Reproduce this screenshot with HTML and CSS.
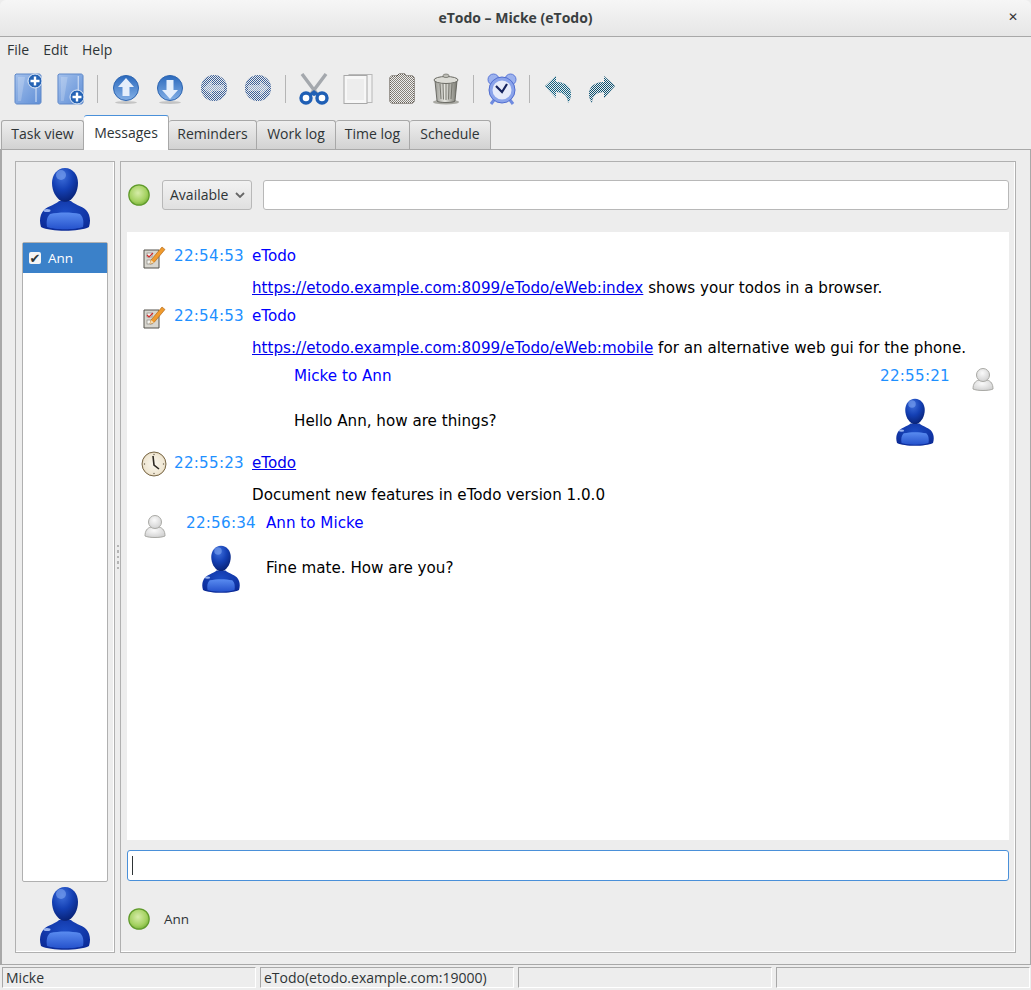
FILE: index.html
```html
<!DOCTYPE html>
<html lang="en">
<head>
  <meta charset="UTF-8">
  <title>eTodo - Micke (eTodo)</title>
  <meta name="viewport" content="width=device-width, initial-scale=1.0">
  <link rel="stylesheet" href="styles.css">
</head>
<body>
  <svg class="sprites" aria-hidden="true">
    <defs>
      <pattern id="dither" width="2" height="2" patternUnits="userSpaceOnUse">
        <rect width="1" height="1" fill="#ededed"/>
        <rect x="1" y="1" width="1" height="1" fill="#ededed"/>
      </pattern>
      <linearGradient id="gBook" x1="0" y1="0" x2="1" y2="1">
        <stop offset="0" stop-color="#a4c1ec"/><stop offset="1" stop-color="#5f8ed6"/>
      </linearGradient>
      <linearGradient id="gBlueBtn" x1="0" y1="0" x2="0" y2="1">
        <stop offset="0" stop-color="#2a69bd"/><stop offset="1" stop-color="#84b0e6"/>
      </linearGradient>
      <radialGradient id="gBody" cx="0.5" cy="0.35" r="0.7">
        <stop offset="0" stop-color="#1c4cc4"/><stop offset="1" stop-color="#0b2a96"/>
      </radialGradient>
      <linearGradient id="gChest" x1="0" y1="0" x2="0" y2="1">
        <stop offset="0" stop-color="#5a8cf0"/><stop offset="1" stop-color="#2552cc"/>
      </linearGradient>
      <radialGradient id="gHead" cx="0.4" cy="0.25" r="0.8">
        <stop offset="0" stop-color="#3f70dc"/><stop offset="0.5" stop-color="#1440b4"/><stop offset="1" stop-color="#071f70"/>
      </radialGradient>
      <radialGradient id="gBall" cx="0.45" cy="0.4" r="0.6">
        <stop offset="0" stop-color="#d6eca8"/><stop offset="0.7" stop-color="#a4d161"/><stop offset="1" stop-color="#7cb53c"/>
      </radialGradient>
      <radialGradient id="gGrey" cx="0.45" cy="0.35" r="0.7">
        <stop offset="0" stop-color="#fafafa"/><stop offset="1" stop-color="#cfcfcf"/>
      </radialGradient>
      <linearGradient id="gTrash" x1="0" y1="0" x2="1" y2="0">
        <stop offset="0" stop-color="#9b9b95"/><stop offset="0.45" stop-color="#e6e6e0"/><stop offset="1" stop-color="#77776f"/>
      </linearGradient>
      <radialGradient id="gClock" cx="0.5" cy="0.5" r="0.55">
        <stop offset="0" stop-color="#fbf8ef"/><stop offset="0.8" stop-color="#efe6d2"/><stop offset="1" stop-color="#b79c6c"/>
      </radialGradient>

      <symbol id="i-person" viewBox="0 0 64 64">
        <path d="M8 60C6 54 7 47 11 43c4-4 13-6 15-9h12c2 3 11 5 15 9 4 4 5 11 3 17-10 5-38 5-48 0z" fill="url(#gBody)"/>
        <path d="M14 60c-1-6 0-10 3-13 9-2 21-2 30 0 3 3 4 7 3 13-8 3-28 3-36 0z" fill="url(#gChest)"/>
        <path d="M32 1c8 0 13 7 13 15s-4 15-9 18c-2 1-6 1-8 0-5-3-9-10-9-18S24 1 32 1z" fill="url(#gHead)"/>
        <ellipse cx="14" cy="43.500" rx="3.500" ry="1.500" fill="#bcd2ff" opacity="0.8"/>
        <ellipse cx="28" cy="8" rx="5" ry="5" fill="#7fa5f0" opacity="0.6"/>
      </symbol>

      <symbol id="i-grey" viewBox="0 0 22 24">
        <path d="M1 22c0-5 2-8 6-9h8c4 1 6 4 6 9-4 2-16 2-20 0z" fill="url(#gGrey)" stroke="#a9a9a5"/>
        <circle cx="11" cy="8" r="6.500" fill="url(#gGrey)" stroke="#a9a9a5"/>
      </symbol>

      <symbol id="i-ball" viewBox="0 0 22 22">
        <circle cx="11" cy="11" r="10.200" fill="url(#gBall)" stroke="#5f9a2a" stroke-width="1.200"/>
      </symbol>

      <symbol id="i-memo" viewBox="0 0 24 24">
        <path d="M2 5h15v18H2z" fill="#d8d6cf" stroke="#55534d"/>
        <rect x="5" y="8" width="5" height="4" fill="#f4f4f0" stroke="#8a8880" stroke-width="0.700"/>
        <rect x="5" y="15" width="5" height="4" fill="#f4f4f0" stroke="#8a8880" stroke-width="0.700"/>
        <path d="M5 10l2 2 4-4" fill="none" stroke="#d42a2a" stroke-width="1.100"/>
        <path d="M9 15L20 2l3 2.500-11 13-4 1.500z" fill="#ef9a2d" stroke="#a95f10" stroke-width="0.600"/>
        <path d="M9 15l-1 4 4-1.500z" fill="#f4dcb0"/>
      </symbol>

      <symbol id="i-clock" viewBox="0 0 26 26">
        <circle cx="13" cy="13" r="12" fill="url(#gClock)" stroke="#7a6a4c"/>
        <path d="M12 5l1 9 5 4" fill="none" stroke="#2e2a24" stroke-width="1.600"/>
        <g fill="#6b6150"><circle cx="13" cy="3.500" r="0.700"/><circle cx="13" cy="22.500" r="0.700"/><circle cx="3.500" cy="13" r="0.700"/><circle cx="22.500" cy="13" r="0.700"/></g>
      </symbol>

      <symbol id="i-book" viewBox="0 0 28 32" preserveAspectRatio="none">
        <path d="M2 1h23c1 0 2 1 2 2v26c0 1-1 2-2 2H3c-1 0-2-1-2-2V2z" fill="url(#gBook)" stroke="#5f88c8"/>
        <path d="M22 3v26" stroke="#dbe7f8"/>
        <path d="M4 4h7L7 28H4z" fill="#fff" opacity="0.2"/>
      </symbol>

      <symbol id="i-plus" viewBox="0 0 16 16">
        <circle cx="8" cy="8" r="7" fill="#2563b5" stroke="#e7eef9"/>
        <path d="M8 3.500v9M3.500 8h9" stroke="#fff" stroke-width="2.400"/>
      </symbol>
    </defs>
  </svg>

  <header class="titlebar">
    <span class="title">eTodo – Micke (eTodo)</span>
    <span class="close">✕</span>
  </header>

  <nav class="menubar">
    <span>File</span>
    <span>Edit</span>
    <span>Help</span>
  </nav>

  <div class="toolbar">
    <svg class="tool" viewBox="0 0 32 32"><use href="#i-book" x="4" width="28" height="32"/><use href="#i-plus" x="17" y="0" width="16" height="16"/></svg>
    <svg class="tool" viewBox="0 0 32 32"><use href="#i-book" x="3" width="27" height="32"/><use href="#i-plus" x="15" y="16" width="16" height="16"/></svg>
    <i class="sep"></i>
    <svg class="tool" viewBox="0 0 32 32">
      <ellipse cx="16" cy="29.500" rx="11" ry="1.500" fill="#c4c4c4"/>
      <circle cx="16" cy="15" r="12.500" fill="url(#gBlueBtn)" stroke="#2c64b0"/>
      <path d="M16 5l8 9h-4.500v9h-7v-9H8z" fill="#e4eefb"/>
    </svg>
    <svg class="tool" viewBox="0 0 32 32">
      <ellipse cx="16" cy="29.500" rx="11" ry="1.500" fill="#c4c4c4"/>
      <circle cx="16" cy="15" r="12.500" fill="url(#gBlueBtn)" stroke="#2c64b0"/>
      <path d="M16 26l-8-9h4.500V7h7v10H24z" fill="#e4eefb"/>
    </svg>
    <svg class="tool" viewBox="0 0 32 32">
      <circle cx="16" cy="15" r="13" fill="#3a5f98"/>
      <path d="M5 15l9-7v4h12v6H14v4z" fill="#8ea6c8"/>
      <circle cx="16" cy="15" r="13" fill="url(#dither)"/>
    </svg>
    <svg class="tool" viewBox="0 0 32 32">
      <circle cx="16" cy="15" r="13" fill="#3a5f98"/>
      <path d="M27 15l-9-7v4H6v6h12v4z" fill="#8ea6c8"/>
      <circle cx="16" cy="15" r="13" fill="url(#dither)"/>
    </svg>
    <i class="sep"></i>
    <svg class="tool" viewBox="0 0 32 32">
      <path d="M4 1l15 20M28 1L13 21" stroke="#a4a8ad" stroke-width="3.400" fill="none"/>
      <circle cx="8" cy="25" r="5" fill="#fff" stroke="#1f5fb5" stroke-width="3.400"/>
      <circle cx="24" cy="25" r="5" fill="#fff" stroke="#1f5fb5" stroke-width="3.400"/>
      <path d="M11 21l5-4 5 4-5 2z" fill="#1f5fb5"/>
    </svg>
    <svg class="tool" viewBox="0 0 32 32">
      <rect x="7" y="1.500" width="23" height="28" fill="#f2f2f2" stroke="#b8b8b8"/>
      <rect x="2" y="2.500" width="23" height="28" fill="#f7f7f7" stroke="#a8a8a8"/>
      <path d="M5 6h17v21H5z" fill="#e6e6e6" opacity="0.600"/>
    </svg>
    <svg class="tool" viewBox="0 0 32 32">
      <path d="M6 3h5l2-2h6l2 2h5c1 0 2 1 2 2v23c0 1-1 2-2 2H6c-1 0-2-1-2-2V5c0-1 1-2 2-2z" fill="#858078" stroke="#4a4238"/>
      <path d="M6 3h5l2-2h6l2 2h5c1 0 2 1 2 2v23c0 1-1 2-2 2H6c-1 0-2-1-2-2V5c0-1 1-2 2-2z" fill="url(#dither)"/>
    </svg>
    <svg class="tool" viewBox="0 0 32 32">
      <ellipse cx="16" cy="29" rx="13" ry="2.500" fill="#a9a9a3"/>
      <path d="M5 8l2 20c1 2 17 2 18 0l2-20z" fill="url(#gTrash)" stroke="#55554f" stroke-width="0.800"/>
      <path d="M10 11l1 15M16 11v16M22 11l-1 15M13 11l.5 15.500M19 11l-.5 15.500" stroke="#6f6f68" stroke-width="0.900"/>
      <ellipse cx="16" cy="7" rx="12" ry="3.500" fill="#dcdcd6" stroke="#6a6a63"/>
      <ellipse cx="16" cy="2.800" rx="3" ry="1.800" fill="#bdbdb6" stroke="#6a6a63" stroke-width="0.700"/>
    </svg>
    <i class="sep"></i>
    <svg class="tool" viewBox="0 0 32 32">
      <path d="M8 27l-3 4M24 27l3 4" stroke="#6f8be0" stroke-width="3"/>
      <circle cx="7.500" cy="6.500" r="5.500" fill="#9cb2ee" stroke="#5b78d8"/>
      <circle cx="24.500" cy="6.500" r="5.500" fill="#9cb2ee" stroke="#5b78d8"/>
      <circle cx="16" cy="17" r="13" fill="#8aa3ea" stroke="#4f6cd0"/>
      <circle cx="16" cy="17" r="9.500" fill="#e6ebfa"/>
      <path d="M10 13l6 6 5-8" fill="none" stroke="#16235e" stroke-width="2.200"/>
    </svg>
    <i class="sep"></i>
    <svg class="tool" viewBox="0 0 32 32">
      <path d="M3 13L14 3v6c8 0 15 4 15 12 0 3-1 6-3 9 0-7-4-11-12-11v6z" fill="#0f5f80"/>
      <path d="M3 13L14 3v6c8 0 15 4 15 12 0 3-1 6-3 9 0-7-4-11-12-11v6z" fill="url(#dither)"/>
    </svg>
    <svg class="tool" viewBox="0 0 32 32">
      <path d="M29 13L18 3v6C10 9 3 13 3 21c0 3 1 6 3 9 0-7 4-11 12-11v6z" fill="#0a5070"/>
      <path d="M29 13L18 3v6C10 9 3 13 3 21c0 3 1 6 3 9 0-7 4-11 12-11v6z" fill="url(#dither)"/>
    </svg>
  </div>

  <div class="tabs">
    <span class="tab">Task view</span>
    <span class="tab active">Messages</span>
    <span class="tab">Reminders</span>
    <span class="tab">Work log</span>
    <span class="tab">Time log</span>
    <span class="tab">Schedule</span>
  </div>

  <main class="notebook">
    <aside class="users panel">
      <svg class="avatar"><use href="#i-person"/></svg>
      <ul class="user-list">
        <li class="selected"><span class="check">✔</span>Ann</li>
      </ul>
      <svg class="avatar"><use href="#i-person"/></svg>
    </aside>

    <div class="splitter"><i></i><i></i><i></i><i></i><i></i></div>

    <section class="chat panel">
      <div class="status-row">
        <svg class="ball"><use href="#i-ball"/></svg>
        <div class="select"><span class="select-label">Available</span><svg class="chevron" viewBox="0 0 10 6"><path d="M1 1l4 4 4-4" fill="none" stroke="#666" stroke-width="1.800"/></svg></div>
        <div class="field"></div>
      </div>

      <div class="log">
        <div class="msg sys">
          <svg class="msg-icon"><use href="#i-memo"/></svg>
          <span class="time">22:54:53</span>
          <span class="who">eTodo</span>
          <p class="text"><a href="#">https://etodo.example.com:8099/eTodo/eWeb:index</a> shows your todos in a browser.</p>
        </div>
        <div class="msg sys">
          <svg class="msg-icon"><use href="#i-memo"/></svg>
          <span class="time">22:54:53</span>
          <span class="who">eTodo</span>
          <p class="text"><a href="#">https://etodo.example.com:8099/eTodo/eWeb:mobile</a> for an alternative web gui for the phone.</p>
        </div>
        <div class="msg out">
          <div class="out-main">
            <span class="who">Micke to Ann</span>
            <p>Hello Ann, how are things?</p>
          </div>
          <div class="out-time">
            <span class="time">22:55:21</span>
            <svg class="small-avatar"><use href="#i-person"/></svg>
          </div>
          <svg class="grey"><use href="#i-grey"/></svg>
        </div>
        <div class="msg sys">
          <svg class="msg-icon clock"><use href="#i-clock"/></svg>
          <span class="time">22:55:23</span>
          <a class="who" href="#">eTodo</a>
          <p class="text">Document new features in eTodo version 1.0.0</p>
        </div>
        <div class="msg in">
          <svg class="grey"><use href="#i-grey"/></svg>
          <div class="in-time">
            <span class="time">22:56:34</span>
            <svg class="small-avatar"><use href="#i-person"/></svg>
          </div>
          <div class="in-main">
            <span class="who">Ann to Micke</span>
            <p>Fine mate. How are you?</p>
          </div>
        </div>
      </div>

      <div class="field compose"><i class="caret"></i></div>

      <div class="peer-row">
        <svg class="ball"><use href="#i-ball"/></svg>
        <span>Ann</span>
      </div>
    </section>
  </main>

  <footer class="statusbar">
    <span>Micke</span>
    <span>eTodo(etodo.example.com:19000)</span>
    <span></span>
    <span></span>
  </footer>
</body>
</html>
```

FILE: styles.css
```css
body {
  margin: 0;
  height: 990px;
  display: flex;
  flex-direction: column;
  overflow: hidden;
  background-color: #ededed;
  color: #2e3436;
  font-family: "Open Sans", "Noto Sans", sans-serif;
  font-size: 14px;
}

.sprites {
  display: block;
  width: 0;
  height: 0;
  flex: none;
}

.titlebar {
  height: 36px;
  flex: none;
  box-sizing: content-box;
  display: grid;
  grid-template-columns: 1fr auto 1fr;
  align-items: center;
  border-bottom: 1px solid #a8a8a8;
  background: linear-gradient(#f6f6f6, #e6e6e6);
  border-radius: 6px 6px 0 0;
}

.title {
  grid-column: 2;
  padding-bottom: 2px;
  font-weight: 700;
  font-size: 14px;
  color: #3a3f41;
}

.close {
  justify-self: end;
  margin-right: 13px;
  padding-bottom: 2px;
  font-family: "DejaVu Sans", sans-serif;
  font-size: 12px;
  font-weight: 700;
  color: #333;
}

.menubar {
  height: 26px;
  flex: none;
  box-sizing: border-box;
  padding: 0 0 2px 7px;
  display: flex;
  align-items: center;
  gap: 14px;
}

.toolbar {
  height: 52px;
  flex: none;
  display: flex;
  align-items: center;
  gap: 12px;
  padding-left: 10px;
}

.tool {
  width: 32px;
  height: 32px;
  flex: none;
}

.sep {
  width: 1px;
  height: 28px;
  background-color: #b5b5b5;
  margin-left: -1px;
}

.tabs {
  height: 34px;
  flex: none;
  display: grid;
  grid-template-columns: 83px 85px 88px 79px 74px 81px;
  justify-content: start;
  align-items: end;
  padding-left: 1px;
}

.tab {
  height: 29px;
  box-sizing: border-box;
  line-height: 25px;
  text-align: center;
  border: 1px solid #a8a8a8;
  border-bottom: none;
  border-left-width: 0;
  border-radius: 3px 3px 0 0;
  background: linear-gradient(#eeeeee, #d2d2d2);
}

.tab:first-child {
  border-left-width: 1px;
}

.tab.active {
  height: 35px;
  line-height: 34px;
  margin-bottom: -1px;
  position: relative;
  z-index: 1;
  border-top: 1px solid #4a90d9;
  background: #fff;
}

.notebook {
  flex: 1;
  min-height: 0;
  display: flex;
  padding: 11px 14px 11px 13px;
  border: 1px solid #a8a8a8;
  border-left-width: 2px;
}

.panel {
  box-sizing: border-box;
  border: 1px solid #b0b0b0;
  box-shadow: inset -1px -1px 0 #fff;
}

.users {
  width: 100px;
  flex: none;
  display: flex;
  flex-direction: column;
  align-items: center;
  padding: 5px 6px 2px;
}

.avatar {
  width: 64px;
  height: 64px;
  flex: none;
}

.user-list {
  list-style: none;
  margin: 11px 0 4px;
  padding: 0;
  width: 86px;
  flex: 1;
  background-color: #fff;
  border: 1px solid #b0b0b0;
  border-radius: 2px;
  box-sizing: border-box;
}

.user-list li {
  height: 30px;
  display: flex;
  align-items: center;
  gap: 7px;
  padding-left: 6px;
  font-size: 13.5px;
}

.user-list li.selected {
  background-color: #3b81c9;
  color: #fff;
}

.check {
  width: 12px;
  height: 12px;
  flex: none;
  display: flex;
  align-items: center;
  justify-content: center;
  border-radius: 2px;
  background-color: #f4f4f4;
  color: #2e3436;
  font-family: "DejaVu Sans", sans-serif;
  font-size: 13px;
  line-height: 1;
}

.splitter {
  width: 5px;
  flex: none;
  display: flex;
  flex-direction: column;
  justify-content: center;
  align-items: center;
  gap: 3px;
}

.splitter i {
  width: 2px;
  height: 2.500px;
  background-color: #b5b5b5;
}

.chat {
  flex: 1;
  min-width: 0;
  display: flex;
  flex-direction: column;
  padding: 0 6px 1px;
}

.status-row {
  height: 70px;
  flex: none;
  display: flex;
  align-items: center;
  padding-bottom: 4px;
  box-sizing: border-box;
}

.ball {
  width: 22px;
  height: 22px;
  flex: none;
  margin-left: 1px;
}

.select {
  width: 90px;
  height: 30px;
  flex: none;
  box-sizing: border-box;
  margin-left: 12px;
  padding: 0 6px 0 7px;
  display: flex;
  align-items: center;
  justify-content: space-between;
  border: 1px solid #b8b8b8;
  border-radius: 3px;
  background: linear-gradient(#f2f2f2, #e0e0e0);
}

.select-label {
  padding-bottom: 2px;
}

.chevron {
  width: 10px;
  height: 6px;
}

.field {
  height: 30px;
  box-sizing: border-box;
  background-color: #fff;
  border: 1px solid #b8b8b8;
  border-radius: 3px;
}

.status-row .field {
  flex: 1;
  margin-left: 11px;
}

.log {
  flex: 1;
  min-height: 0;
  background-color: #fff;
  padding-top: 9px;
  font-family: "DejaVu Sans", sans-serif;
  font-size: 15.150px;
  color: #000;
}

.log p {
  margin: 0;
}

.log a {
  color: #0000ee;
}

.time {
  color: #1e90ff;
  letter-spacing: 0.250px;
}

.who {
  color: #0000ff;
}

.msg {
  display: grid;
}

.msg.sys {
  height: 60px;
  grid-template-columns: 47px 78px 1fr;
  grid-template-rows: 30px 30px;
  align-items: center;
}

.msg-icon {
  width: 24px;
  height: 24px;
  margin-left: 15px;
  margin-top: 2px;
}

.msg-icon.clock {
  width: 26px;
  height: 26px;
  margin-left: 14px;
}

.msg.sys .text {
  grid-column: 3;
  margin-top: 4px;
  white-space: nowrap;
}

.msg.out {
  height: 87px;
  grid-template-columns: 1fr auto 37px;
  padding-left: 167px;
}

.who, .time {
  line-height: 30px;
}

.out-main p, .in-main p {
  line-height: 30px;
  margin-top: 15px;
}

.out-time, .in-time {
  display: flex;
  flex-direction: column;
  align-items: center;
}

.out-time {
  margin-right: 22px;
}

.in-time {
  width: 70px;
}

.small-avatar {
  width: 48px;
  height: 48px;
  margin-top: 7px;
}

.grey {
  width: 22px;
  height: 24px;
  margin-top: 6px;
}

.msg.in {
  grid-template-columns: 59px 80px 1fr;
}

.msg.in .grey {
  margin-left: 17px;
}

.compose {
  flex: none;
  height: 31px;
  margin-top: 10px;
  display: flex;
  align-items: center;
  padding-left: 4px;
  border-color: #4a90d9;
}

.caret {
  width: 1px;
  height: 19px;
  background-color: #2e3436;
}

.peer-row {
  height: 70px;
  flex: none;
  box-sizing: border-box;
  padding-top: 6px;
  display: flex;
  align-items: center;
  gap: 14px;
  font-size: 13.500px;
}

.statusbar {
  height: 25px;
  flex: none;
  display: flex;
  gap: 4px;
  padding: 2px 1px 2px 2px;
  box-sizing: border-box;
}

.statusbar span {
  flex: 1;
  box-sizing: border-box;
  padding-left: 3px;
  line-height: 20px;
  border: 1px solid;
  border-color: #a8a8a8 #fff #fff #a8a8a8;
  white-space: nowrap;
}
```
